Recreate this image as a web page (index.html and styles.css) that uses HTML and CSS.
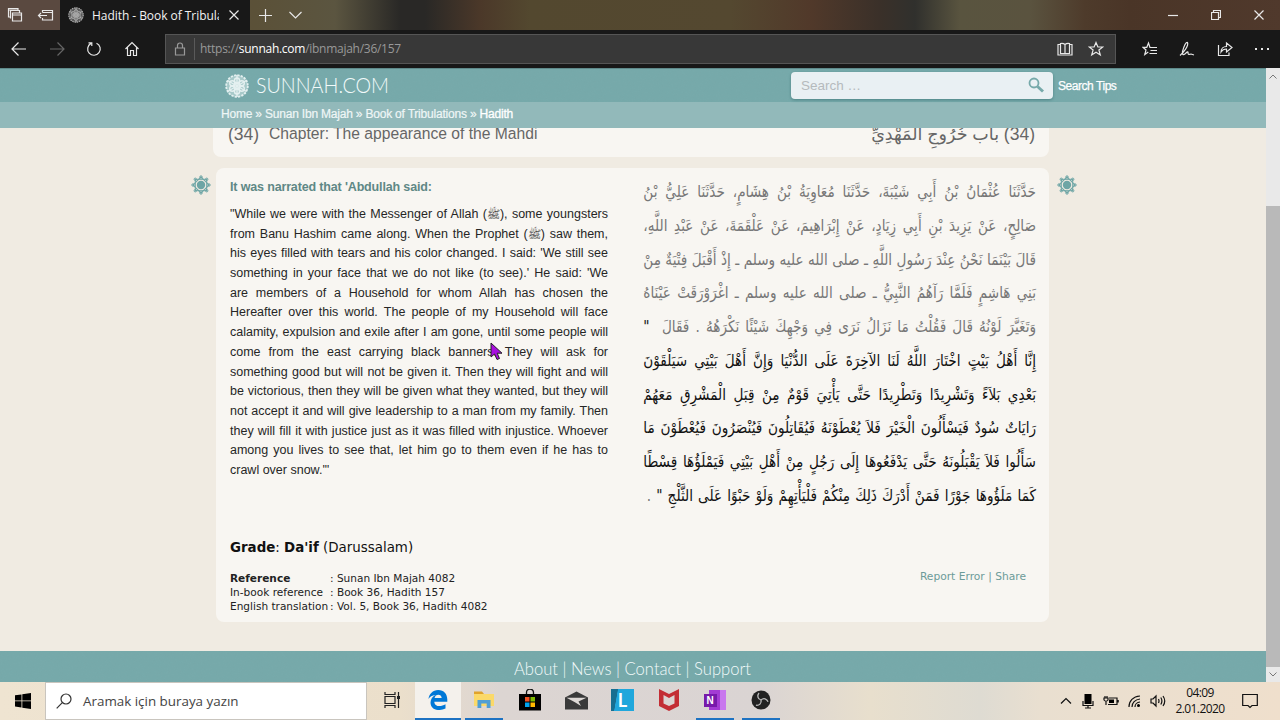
FILE: index.html
```
<!DOCTYPE html>
<html lang="en">
<head>
  <meta charset="UTF-8" />
  <meta name="viewport" content="width=device-width, initial-scale=1.0" />
  <title>Hadith - Book of Tribulations - Sunnah.com</title>
  <link rel="stylesheet" href="styles.css">
</head>
<body>

  <!-- shared shapes -->
  <svg class="defs" width="0" height="0" aria-hidden="true">
    <symbol id="rosette" viewBox="0 0 24 24">
      <circle cx="12" cy="12" r="11" fill="currentColor" opacity=".45" />
      <g fill="none" stroke="currentColor" stroke-width="1.400">
        <circle cx="12" cy="12" r="10.8" stroke-width="1.800" stroke-dasharray="2.200 1.200" />
        <circle cx="12" cy="12" r="2.500" />
        <circle cx="12" cy="6.500" r="2.500" /><circle cx="12" cy="17.500" r="2.500" />
        <circle cx="7.200" cy="9.200" r="2.500" /><circle cx="16.800" cy="9.200" r="2.500" />
        <circle cx="7.200" cy="14.800" r="2.500" /><circle cx="16.800" cy="14.800" r="2.500" />
        <path d="M12 1V23M2.500 6.500L21.500 17.500M2.500 17.500L21.500 6.500" />
      </g>
    </symbol>
    <symbol id="star" viewBox="0 0 20 20">
      <g fill="none" stroke="currentColor" stroke-width="1">
        <rect x="4.300" y="4.300" width="11.400" height="11.400" />
        <rect x="4.300" y="4.300" width="11.400" height="11.400" transform="rotate(45 10 10)" />
        <circle cx="10" cy="2" r="1.200" /><circle cx="10" cy="18" r="1.200" />
        <circle cx="2" cy="10" r="1.200" /><circle cx="18" cy="10" r="1.200" />
        <circle cx="4.300" cy="4.300" r="1.200" /><circle cx="15.700" cy="4.300" r="1.200" />
        <circle cx="4.300" cy="15.700" r="1.200" /><circle cx="15.700" cy="15.700" r="1.200" />
      </g>
      <circle cx="10" cy="10" r="4.200" fill="currentColor" />
    </symbol>
  </svg>

  <!-- Browser tabs -->
  <div class="tabs">
    <div class="tab-tools">
      <svg width="16" height="16" viewBox="0 0 16 16"><path d="M3.500 10H1.500V1.500H11V3M3.500 11.500V3.500H12.500V5.500M1.500 3H11M5.500 6H14.500V14H5.500ZM5.500 8H14.500" /></svg>
      <svg width="17" height="16" viewBox="0 0 17 16"><path d="M5.500 5.500V3.500H15.500V13H5.500V11M5.500 5.500H15.500M10 8.500H1.500M4 6L1.500 8.500L4 11" /></svg>
    </div>
    <div class="tab">
      <svg class="favicon" width="16" height="16"><use href="#rosette" /></svg>
      <span class="tab-title">Hadith - Book of Tribulations</span>
      <svg width="10" height="10" viewBox="0 0 10 10"><path d="M.5.5L9.500 9.500M9.500.5L.5 9.500" /></svg>
    </div>
    <svg class="new-tab" width="13" height="13" viewBox="0 0 13 13"><path d="M6.500 0V13M0 6.500H13" /></svg>
    <svg class="tab-menu" width="13" height="8" viewBox="0 0 13 8"><path d="M.5 1L6.500 7L12.500 1" /></svg>
    <div class="window-buttons">
      <svg width="10" height="10" viewBox="0 0 10 10"><path d="M0 5.500H10" /></svg>
      <svg width="10" height="10" viewBox="0 0 10 10"><path d="M.5 2.500H7.500V9.500H.5ZM2.500 2.500V.5H9.500V7.500H7.500" /></svg>
      <svg width="10" height="10" viewBox="0 0 10 10"><path d="M.5.5L9.500 9.500M9.500.5L.5 9.500" /></svg>
    </div>
  </div>

  <!-- Address row -->
  <div class="toolbar">
    <div class="nav-buttons">
      <svg width="16" height="16" viewBox="0 0 16 16"><path d="M15 8H1.500M7.500 1.500L1 8L7.500 14.500" /></svg>
      <svg class="dim" width="16" height="16" viewBox="0 0 16 16"><path d="M1 8H14.500M8.500 1.500L15 8L8.500 14.500" /></svg>
      <svg width="16" height="16" viewBox="0 0 16 16"><path d="M10.500 2.200A6.300 6.300 0 1 1 5 2.400M2.500 1.800H5.800V5" /></svg>
      <svg width="16" height="16" viewBox="0 0 16 16"><path d="M1.500 8L8 1.500L14.500 8M3.500 6.500V14.500H6.500V9.500H9.500V14.500H12.500V6.500" /></svg>
    </div>
    <div class="address">
      <svg class="lock" width="12" height="14" viewBox="0 0 12 14"><path d="M1.500 6H10.500V13H1.500ZM3.500 6V3.500A2.500 2.500 0 0 1 8.500 3.500V6" /></svg>
      <span class="url">https://<b>sunnah.com</b>/ibnmajah/36/157</span>
      <svg class="reader" width="16" height="14" viewBox="0 0 16 14"><path d="M8 2.500Q6 .8 3.500 1.500V11.500H8ZM8 2.500Q10 .8 12.500 1.500V11.500H8ZM3.500 2.500H1V13H15V2.500H12.500" /></svg>
      <svg width="16" height="16" viewBox="0 0 16 16"><path d="M8 1.500L9.900 6H14.800L10.900 9L12.300 14L8 11.200L3.700 14L5.100 9L1.200 6H6.100Z" /></svg>
    </div>
    <div class="tool-buttons">
      <svg width="16" height="16" viewBox="0 0 16 16"><path d="M8 6.500L6.500 2L4.800 6.300H1L4 9L2.800 13.500L6.300 11M7.500 6.500H15M8.500 9.500H15M7.500 12.500H15" /></svg>
      <svg width="16" height="16" viewBox="0 0 16 16"><path d="M1 14.500C4 12 10 5 8.500 1.500C6.500 1 4.500 7 3.500 10.500C3 13 4 14.500 6 13C8 10.500 9.500 10 9 12C9 14.500 11 13 12 13L15 14" /></svg>
      <svg width="16" height="16" viewBox="0 0 16 16"><path d="M1.500 4V14.500H12V11.500M4 11C4 7.500 6.500 5.500 9.500 5.500V2L15 6.500L9.500 11V8C7 8 5.500 8.500 4 11Z" /></svg>
      <svg width="16" height="16" viewBox="0 0 16 16"><path d="M1 8H3M7 8H9M13 8H15" stroke-width="2" /></svg>
    </div>
  </div>

  <!-- Page -->
  <div class="viewport">
    <div class="page">
      <header>
        <div class="banner">
          <svg class="logo" width="24" height="24"><use href="#rosette" /></svg>
          <svg class="wordmark" width="134" height="24"><text x="0" y="19" textLength="133" lengthAdjust="spacingAndGlyphs">SUNNAH.COM</text></svg>
          <div class="search">
            <span>Search …</span>
            <svg width="17" height="17" viewBox="0 0 17 17"><circle cx="6" cy="6" r="4.500" stroke-width="1.800" /><path d="M9.500 9.500L15 14.500" stroke-width="3" /></svg>
          </div>
          <a class="tips">Search Tips</a>
        </div>
        <nav class="crumbs">Home » Sunan Ibn Majah » Book of Tribulations » <b>Hadith</b></nav>
      </header>

      <main>
        <section class="chapter">
          <span class="num">(34)</span>
          <span class="chapter-en">Chapter: The appearance of the Mahdi</span>
          <span class="chapter-ar" lang="ar" dir="rtl">(34) باب خُرُوجِ الْمَهْدِيِّ</span>
        </section>

        <div class="row">
          <svg class="mark" width="20" height="20"><use href="#star" /></svg>
          <article class="hadith">
            <div class="texts">
              <div class="english">
                <p class="narrator">It was narrated that 'Abdullah said:</p>
                <p>"While we were with the Messenger of Allah (<span class="saw">ﷺ</span>), some youngsters</p>
                <p>from Banu Hashim came along. When the Prophet (<span class="saw">ﷺ</span>) saw them,</p>
                <p>his eyes filled with tears and his color changed. I said: 'We still see</p>
                <p>something in your face that we do not like (to see).' He said: 'We</p>
                <p>are members of a Household for whom Allah has chosen the</p>
                <p>Hereafter over this world. The people of my Household will face</p>
                <p>calamity, expulsion and exile after I am gone, until some people will</p>
                <p>come from the east carrying black banners. They will ask for</p>
                <p>something good but will not be given it. Then they will fight and will</p>
                <p>be victorious, then they will be given what they wanted, but they will</p>
                <p>not accept it and will give leadership to a man from my family. Then</p>
                <p>they will fill it with justice just as it was filled with injustice. Whoever</p>
                <p>among you lives to see that, let him go to them even if he has to</p>
                <p class="last">crawl over snow.'"</p>
              </div>
              <div class="arabic" lang="ar" dir="rtl">
                <p class="sanad">حَدَّثَنَا عُثْمَانُ بْنُ أَبِي شَيْبَةَ، حَدَّثَنَا مُعَاوِيَةُ بْنُ هِشَامٍ، حَدَّثَنَا عَلِيُّ بْنُ</p>
                <p class="sanad">صَالِحٍ، عَنْ يَزِيدَ بْنِ أَبِي زِيَادٍ، عَنْ إِبْرَاهِيمَ، عَنْ عَلْقَمَةَ، عَنْ عَبْدِ اللَّهِ،</p>
                <p class="sanad">قَالَ بَيْنَمَا نَحْنُ عِنْدَ رَسُولِ اللَّهِ ـ صلى الله عليه وسلم ـ إِذْ أَقْبَلَ فِتْيَةٌ مِنْ</p>
                <p class="sanad">بَنِي هَاشِمٍ فَلَمَّا رَآهُمُ النَّبِيُّ ـ صلى الله عليه وسلم ـ اغْرَوْرَقَتْ عَيْنَاهُ</p>
                <p class="sanad">وَتَغَيَّرَ لَوْنُهُ قَالَ فَقُلْتُ مَا نَزَالُ نَرَى فِي وَجْهِكَ شَيْئًا نَكْرَهُهُ ‏.‏ فَقَالَ ‏ <b>"</b></p>
                <p>إِنَّا أَهْلُ بَيْتٍ اخْتَارَ اللَّهُ لَنَا الآخِرَةَ عَلَى الدُّنْيَا وَإِنَّ أَهْلَ بَيْتِي سَيَلْقَوْنَ</p>
                <p>بَعْدِي بَلاَءً وَتَشْرِيدًا وَتَطْرِيدًا حَتَّى يَأْتِيَ قَوْمٌ مِنْ قِبَلِ الْمَشْرِقِ مَعَهُمْ</p>
                <p>رَايَاتٌ سُودٌ فَيَسْأَلُونَ الْخَيْرَ فَلاَ يُعْطَوْنَهُ فَيُقَاتِلُونَ فَيُنْصَرُونَ فَيُعْطَوْنَ مَا</p>
                <p>سَأَلُوا فَلاَ يَقْبَلُونَهُ حَتَّى يَدْفَعُوهَا إِلَى رَجُلٍ مِنْ أَهْلِ بَيْتِي فَيَمْلَؤُهَا قِسْطًا</p>
                <p>كَمَا مَلَؤُوهَا جَوْرًا فَمَنْ أَدْرَكَ ذَلِكَ مِنْكُمْ فَلْيَأْتِهِمْ وَلَوْ حَبْوًا عَلَى الثَّلْجِ ‏"‏ <i>‏.‏</i></p>
              </div>
            </div>
            <p class="grade"><b>Grade</b>: <b>Da'if</b> (Darussalam)</p>
            <div class="details">
              <table>
                <tr><td><b>Reference</b></td><td>: Sunan Ibn Majah 4082</td></tr>
                <tr><td>In-book reference</td><td>: Book 36, Hadith 157</td></tr>
                <tr><td>English translation</td><td>: Vol. 5, Book 36, Hadith 4082</td></tr>
              </table>
              <span class="links">Report Error | Share</span>
            </div>
          </article>
          <svg class="mark" width="20" height="20"><use href="#star" /></svg>
        </div>
      </main>

      <footer><svg width="238" height="26"><text x="0" y="19" textLength="237" lengthAdjust="spacingAndGlyphs">About | News | Contact | Support</text></svg></footer>
    </div>
    <div class="scrollbar">
      <svg width="8" height="5" viewBox="0 0 8 5"><path d="M.5 4.500L4 1L7.500 4.500" /></svg>
      <div class="thumb"></div>
      <svg width="8" height="5" viewBox="0 0 8 5"><path d="M.5 .5L4 4L7.500 .5" /></svg>
    </div>
    <svg class="pointer" width="13" height="19" viewBox="0 0 13 19"><path d="M1 1V15L4.500 12L7 17.500L9.500 16.500L7.200 11.200H12Z" /></svg>
  </div>

  <!-- Taskbar -->
  <div class="taskbar">
    <div class="start"><svg width="16" height="16" viewBox="0 0 16 16"><path d="M0 2.300L6.500 1.400V7.500H0ZM7.300 1.300L16 0V7.500H7.300ZM0 8.300H6.500V14.500L0 13.600ZM7.300 8.300H16V16L7.300 14.700Z" /></svg></div>
    <div class="task-search">
      <svg width="16" height="16" viewBox="0 0 16 16"><circle cx="10" cy="6" r="5" /><path d="M6.300 9.700L.7 15.300" /></svg>
      <span>Aramak için buraya yazın</span>
    </div>
    <div class="apps">
      <div class="app"><svg width="16" height="16" viewBox="0 0 16 16"><path d="M1 0V2.500H11V0M1 4.500H11V11.500H1ZM1 16V13.500H11V16M14.500 0V16" fill="none" stroke="#222" stroke-width="1.200" /><rect x="13" y="4" width="3" height="3" fill="#222" /></svg></div>
      <div class="app open active"><svg width="20" height="20" viewBox="0 0 20 20"><path fill="#0078d7" d="M.5 9C1 4 4.800 0 10.200 0C16 0 19.300 4 19.300 9.500V11.700H6.300C6.500 17 13 17 17.500 14.300V18.400C10 22 2.500 19.500 2.500 12.500C2.500 9.300 4.500 6.500 7.500 5C4 5.200 1.700 6.800.5 9ZM6.600 8H13.700C13.700 3.500 7 3.500 6.600 8Z" /></svg></div>
      <div class="app open"><svg width="20" height="20" viewBox="0 0 20 20"><path fill="#e0a32c" d="M0 1.500H8L10 4H0Z" /><path fill="#fbd969" d="M0 4H20V16H0Z" /><path fill="#4f9fd4" d="M3.500 10H16.500V18H12.700V13.500H7.300V18H3.500Z" /></svg></div>
      <div class="app"><svg width="22" height="22" viewBox="0 0 22 22"><path d="M7.500 5V3.500A3.500 3.500 0 0 1 14.500 3.500V5" fill="none" stroke="#111" stroke-width="1.300" /><path fill="#000" d="M0 5H22V21.500H0Z" /><path fill="#f25022" d="M6 8H10.500V12.500H6Z" /><path fill="#7fba00" d="M11.500 8H16V12.500H11.500Z" /><path fill="#00a4ef" d="M6 13.500H10.500V18H6Z" /><path fill="#ffb900" d="M11.500 13.500H16V18H11.500Z" /></svg></div>
      <div class="app"><svg width="23" height="19" viewBox="0 0 23 19"><path fill="#3a3a3a" d="M0 6.500L11.500 .5L23 6.500V18.500H0Z" /><path fill="#ddd8d5" d="M1.500 6.800H21.500L13.500 10.500L16 15L9.500 11Z" /></svg></div>
      <div class="app"><div class="lbox">L</div></div>
      <div class="app"><svg width="20" height="22" viewBox="0 0 20 22"><path fill="#c32d34" fill-rule="evenodd" d="M0 0L10 5L20 0V17L10 22L0 17ZM4.500 6V14.500L10 17L15.500 14.500V6L10 9Z" /></svg></div>
      <div class="app open"><div class="onenote"><b>N</b></div></div>
      <div class="app open"><svg width="20" height="20" viewBox="0 0 20 20"><circle cx="10" cy="10" r="9.500" fill="#222" /><g fill="none" stroke="#bbb" stroke-width="1.300"><path id="blade" d="M10 10C6.500 9 6 5.500 8 3" /><use href="#blade" transform="rotate(120 10 10)" /><use href="#blade" transform="rotate(240 10 10)" /></g></svg></div>
    </div>
    <div class="tray">
      <svg width="12" height="16" viewBox="0 0 12 16"><path d="M1 10.500L6 5.500L11 10.500" /></svg>
      <svg width="12" height="16" viewBox="0 0 12 16"><rect x="2.500" y="1" width="7" height="10" fill="#000" stroke="none" /><path d="M1 8V12.500H11V8M6 12.500V15M3 15H9" /></svg>
      <svg width="16" height="16" viewBox="0 0 16 16"><path d="M6 5H14V11.500H5M15.200 7V9.500M1 5H5V7Q3 9.500 1 7ZM2 3V5M4 3V5M3 8V12" /><rect x="6" y="6.500" width="5" height="3.500" fill="#000" stroke="none" /></svg>
      <svg width="13" height="16" viewBox="0 0 13 16"><path d="M1 14C1 8 5 3.500 12 3M4 14C4 10 7 6.500 12 6M7 14C7 11.500 9 9.200 12 9" /><circle cx="10.500" cy="12.500" r="1.500" fill="#000" stroke="none" /></svg>
      <svg width="16" height="16" viewBox="0 0 16 16"><path d="M1 6H3L6 3V13L3 10H1ZM8.500 6Q9.500 8 8.500 10M10.800 4.500Q13 8 10.800 11.500M13 3Q16.500 8 13 13" /></svg>
      <div class="clock">04:09<br>2.01.2020</div>
      <svg class="notes" width="16" height="16" viewBox="0 0 16 16"><path d="M.7 1.500H15.300V12.500H10L8 14.500L6 12.500H.7Z" /></svg>
    </div>
  </div>

</body>
</html>
```
FILE: styles.css
```
* {
  box-sizing: border-box;
}
body {
  margin: 0;
  width: 1280px;
  height: 720px;
  overflow: hidden;
  display: flex;
  flex-direction: column;
  font-family: "Liberation Sans", Arial, sans-serif;
}
p {
  margin: 0;
}
svg {
  display: block;
  flex: none;
}
.defs {
  position: absolute;
}

/* browser chrome */
.tabs {
  height: 30px;
  display: flex;
  align-items: center;
  background: linear-gradient(90deg, #5a4940 0, #5a4940 60px, #5b5138 255px, #5b5540 335px, #292826 400px, #292826 425px, #4b3829 480px, #53482f 530px, #544830 730px, #51392a 810px, #3a3029 880px, #30302d 915px, #59543f 960px, #5a533f 1030px, #4e3b2b 1085px, #4a3527 1130px, #50392c 1280px);
}
.tabs svg,
.toolbar svg {
  fill: none;
  stroke: #e8e8e8;
  stroke-width: 1.2;
}
.tab-tools {
  width: 60px;
  display: flex;
  gap: 14px;
  padding-left: 7px;
}
.tab {
  width: 190px;
  height: 30px;
  padding: 0 11px 0 8px;
  display: flex;
  align-items: center;
  background: #181818;
}
.tabs .favicon {
  color: #aaa;
  stroke: none;
}
.tab-title {
  width: 127px;
  margin: 0 10px 0 8px;
  overflow: hidden;
  white-space: nowrap;
  font: 12px "Open Sans", sans-serif;
  letter-spacing: -0.05px;
  color: #f2f2f2;
}
.new-tab {
  margin-left: 9px;
}
.tab-menu {
  margin-left: 17px;
}
.window-buttons {
  margin-left: auto;
  display: flex;
  gap: 33px;
  padding-right: 16px;
}
.toolbar {
  height: 38px;
  display: flex;
  align-items: center;
  background: #181818;
}
.nav-buttons {
  width: 165px;
  display: flex;
  gap: 21.5px;
  padding-left: 11px;
}
.toolbar .dim {
  stroke: #666;
}
.address {
  width: 951px;
  height: 30px;
  display: flex;
  align-items: center;
  background: #383838;
  border: 1px solid #555;
  padding: 0 11px 0 8px;
}
.toolbar .lock {
  stroke: #999;
}
.url {
  flex: 1;
  height: 22px;
  margin-left: 8px;
  padding-left: 5px;
  border-left: 1px solid #5a5a5a;
  font: 12px/22px "Open Sans", sans-serif;
  letter-spacing: -0.27px;
  color: #999;
}
.url b {
  font-weight: 400;
  color: #fff;
}
.reader {
  margin-right: 15px;
}
.tool-buttons {
  flex: 1;
  display: flex;
  justify-content: space-between;
  padding: 0 10px 0 26px;
}

/* page */
.viewport {
  height: 614px;
  display: flex;
  position: relative;
}
.page {
  width: 1266px;
  display: flex;
  flex-direction: column;
  background: #f0ebe2;
}
.banner {
  height: 34px;
  display: flex;
  align-items: center;
  padding-left: 225px;
  border-top: 1px solid #5f8a8b;
}
.banner,
footer {
  background: #76a9aa url("data:image/svg+xml,%3Csvg xmlns='http://www.w3.org/2000/svg' width='200' height='200'%3E%3Cfilter id='n'%3E%3CfeTurbulence type='fractalNoise' baseFrequency='.25 .35' numOctaves='2' stitchTiles='stitch'/%3E%3CfeColorMatrix values='0 0 0 0 .2 0 0 0 0 .4 0 0 0 0 .4 .35 0 0 0 -.1'/%3E%3C/filter%3E%3Crect width='200' height='200' filter='url(%23n)' opacity='.5'/%3E%3C/svg%3E");
}
.logo {
  color: #e4f0f0;
}
.wordmark {
  margin-left: 7px;
}
.wordmark text,
footer text {
  font-family: Lato, sans-serif;
  font-weight: 300;
  font-size: 22px;
  fill: #f2fafa;
}
.search {
  width: 262px;
  height: 27px;
  margin-left: 401px;
  padding: 0 8px 0 10px;
  display: flex;
  align-items: center;
  justify-content: space-between;
  border-radius: 4px;
  background: #e9f0f3;
  box-shadow: 0 1px 3px #4d8485;
  font-size: 13.5px;
  color: #b5babd;
}
.search svg {
  fill: none;
  stroke: #76a9aa;
}
.tips {
  margin-left: 5px;
  font-size: 12px;
  letter-spacing: -0.45px;
  color: #fff;
  -webkit-text-stroke: 0.25px #fff;
}
.crumbs {
  height: 26px;
  padding-left: 221px;
  background: #92b9ba;
  font-size: 12px;
  letter-spacing: -0.2px;
  line-height: 25px;
  color: #eff6f6;
  -webkit-text-stroke: 0.2px #eff6f6;
}
.crumbs b {
  font-weight: 400;
  color: #fff;
  -webkit-text-stroke: 0.3px #fff;
}
main {
  height: 523px;
  overflow: hidden;
}
.chapter {
  width: 836px;
  height: 40px;
  margin: -11px 0 0 213px;
  padding: 8px 14px 0 15px;
  display: flex;
  border-radius: 8px;
  background: #f8f6f2;
  font-size: 15.65px;
  line-height: 18px;
  color: #666;
}
.num {
  width: 41px;
  font-size: 17.5px;
}
.chapter-ar {
  margin-left: auto;
  font-family: "Liberation Sans", "DejaVu Sans", sans-serif;
  font-size: 17.5px;
  white-space: nowrap;
}
.row {
  display: flex;
  margin-top: 11px;
  padding-left: 191px;
}
.mark {
  margin-top: 7px;
  color: #6da5a5;
}
.hadith {
  width: 833px;
  height: 454px;
  margin: 0 8px 0 5px;
  padding: 10px 13px 0 14px;
  border-radius: 8px;
  background: #f8f6f2;
}
.texts {
  height: 359px;
  display: flex;
  justify-content: space-between;
}
.english {
  width: 378px;
  flex: none;
  font-size: 12.5px;
  color: #262626;
}
.english p {
  height: 19.7px;
  line-height: 19.7px;
  white-space: nowrap;
  text-align-last: justify;
}
.english .narrator {
  height: 27px;
  line-height: 19px;
  text-align-last: left;
  font-weight: 700;
  letter-spacing: -0.15px;
  color: #5f8886;
}
.english .last {
  text-align-last: left;
}
.saw {
  font-size: 11px;
}
/* condensed naskh column */
.arabic {
  width: 462px;
  flex: none;
  margin: -3px 0 0 -40px;
  transform: scaleX(0.85);
  transform-origin: right top;
  font: 16px "DejaVu Sans", sans-serif;
  color: #111;
}
.arabic p {
  height: 33.75px;
  line-height: 33.75px;
  white-space: nowrap;
  text-align-last: justify;
}
.arabic .sanad {
  color: #777;
}
.arabic b {
  font-weight: 400;
  color: #111;
}
.arabic i {
  font-style: normal;
  color: #777;
}
.arabic p:last-child {
  padding-left: 4px;
}
.grade {
  height: 34px;
  font: 13.4px/21px "DejaVu Sans", Verdana, sans-serif;
  color: #111;
}
.details {
  display: flex;
  justify-content: space-between;
  font: 10.55px "DejaVu Sans", Verdana, sans-serif;
  color: #222;
}
.details table {
  border-collapse: collapse;
}
.details td {
  height: 14px;
  padding: 0;
  line-height: 14px;
  white-space: nowrap;
}
.details td:first-child {
  width: 100px;
}
.links {
  padding-right: 10px;
  font-size: 10.7px;
  line-height: 12px;
  color: #6c9b99;
}
footer {
  height: 31px;
  padding: 5px 0 0 514px;
}
footer text {
  font-size: 17px;
}
.scrollbar {
  width: 14px;
  display: flex;
  flex-direction: column;
  align-items: center;
  padding: 6px 0 5px;
  background: #e9e9e9;
}
.scrollbar svg {
  fill: none;
  stroke: #777;
}
.thumb {
  width: 14px;
  height: 461px;
  margin: 127px 0 5px;
  background: #b9b9b9;
}
.pointer {
  position: absolute;
  left: 490px;
  top: 274px;
  fill: #a80fe0;
  stroke: #222;
}

/* taskbar */
.taskbar {
  height: 38px;
  display: flex;
  background: linear-gradient(90deg, #efe4d1 0, #ebdfcb 400px, #dcd5d2 500px, #dad4d3 760px, #e8dfcd 870px, #dedbd2 980px, #e9dfd0 1040px, #efdfcc 1280px);
}
.start {
  width: 45px;
  padding: 11px 0 0 15px;
}
.task-search {
  width: 322px;
  display: flex;
  align-items: center;
  padding-left: 10px;
  gap: 11px;
  background: #fff;
  border: 1px solid #c9c5be;
  font: 13.4px "Open Sans", sans-serif;
  color: #444;
}
.task-search svg {
  fill: none;
  stroke: #333;
  stroke-width: 1.2;
}
.apps {
  display: flex;
  padding-left: 1.5px;
}
.app {
  width: 46.2px;
  height: 38px;
  display: flex;
  align-items: center;
  justify-content: center;
  border-bottom: 2px solid transparent;
}
.open {
  width: 38px;
  margin: 0 4.1px;
  border-bottom-color: #1d72c2;
}
.active {
  width: 46px;
  margin: 0;
  background: #f4f1ec;
}
.lbox {
  width: 23px;
  height: 22px;
  background: linear-gradient(100deg, #176f91 25%, #20a7dc 27%);
  font: bold 18px/22px Lato, sans-serif;
  text-align: center;
  color: #fff;
}
.onenote {
  width: 22px;
  height: 20px;
  padding-top: 4px;
  background: linear-gradient(90deg, transparent 5px, #a33bd4 5px, #a33bd4 16px, #c878ee 16px);
}
.onenote b {
  display: block;
  width: 13px;
  height: 13px;
  background: #7719aa;
  font-size: 10px;
  line-height: 13px;
  text-align: center;
  color: #fff;
}
.tray {
  margin-left: auto;
  display: flex;
  align-items: center;
  padding-right: 22px;
}
.tray svg {
  fill: none;
  stroke: #111;
  stroke-width: 1.2;
  margin-right: 9px;
}
.tray svg:first-child {
  margin-left: -6px;
  margin-right: 10px;
}
.tray svg:nth-child(5) {
  margin-right: 4px;
}
.clock {
  width: 60px;
  margin-right: 12px;
  font: 12px/16.5px "Open Sans", sans-serif;
  letter-spacing: -0.6px;
  text-align: center;
  color: #111;
}
.tray .notes {
  margin-right: 0;
}
```
